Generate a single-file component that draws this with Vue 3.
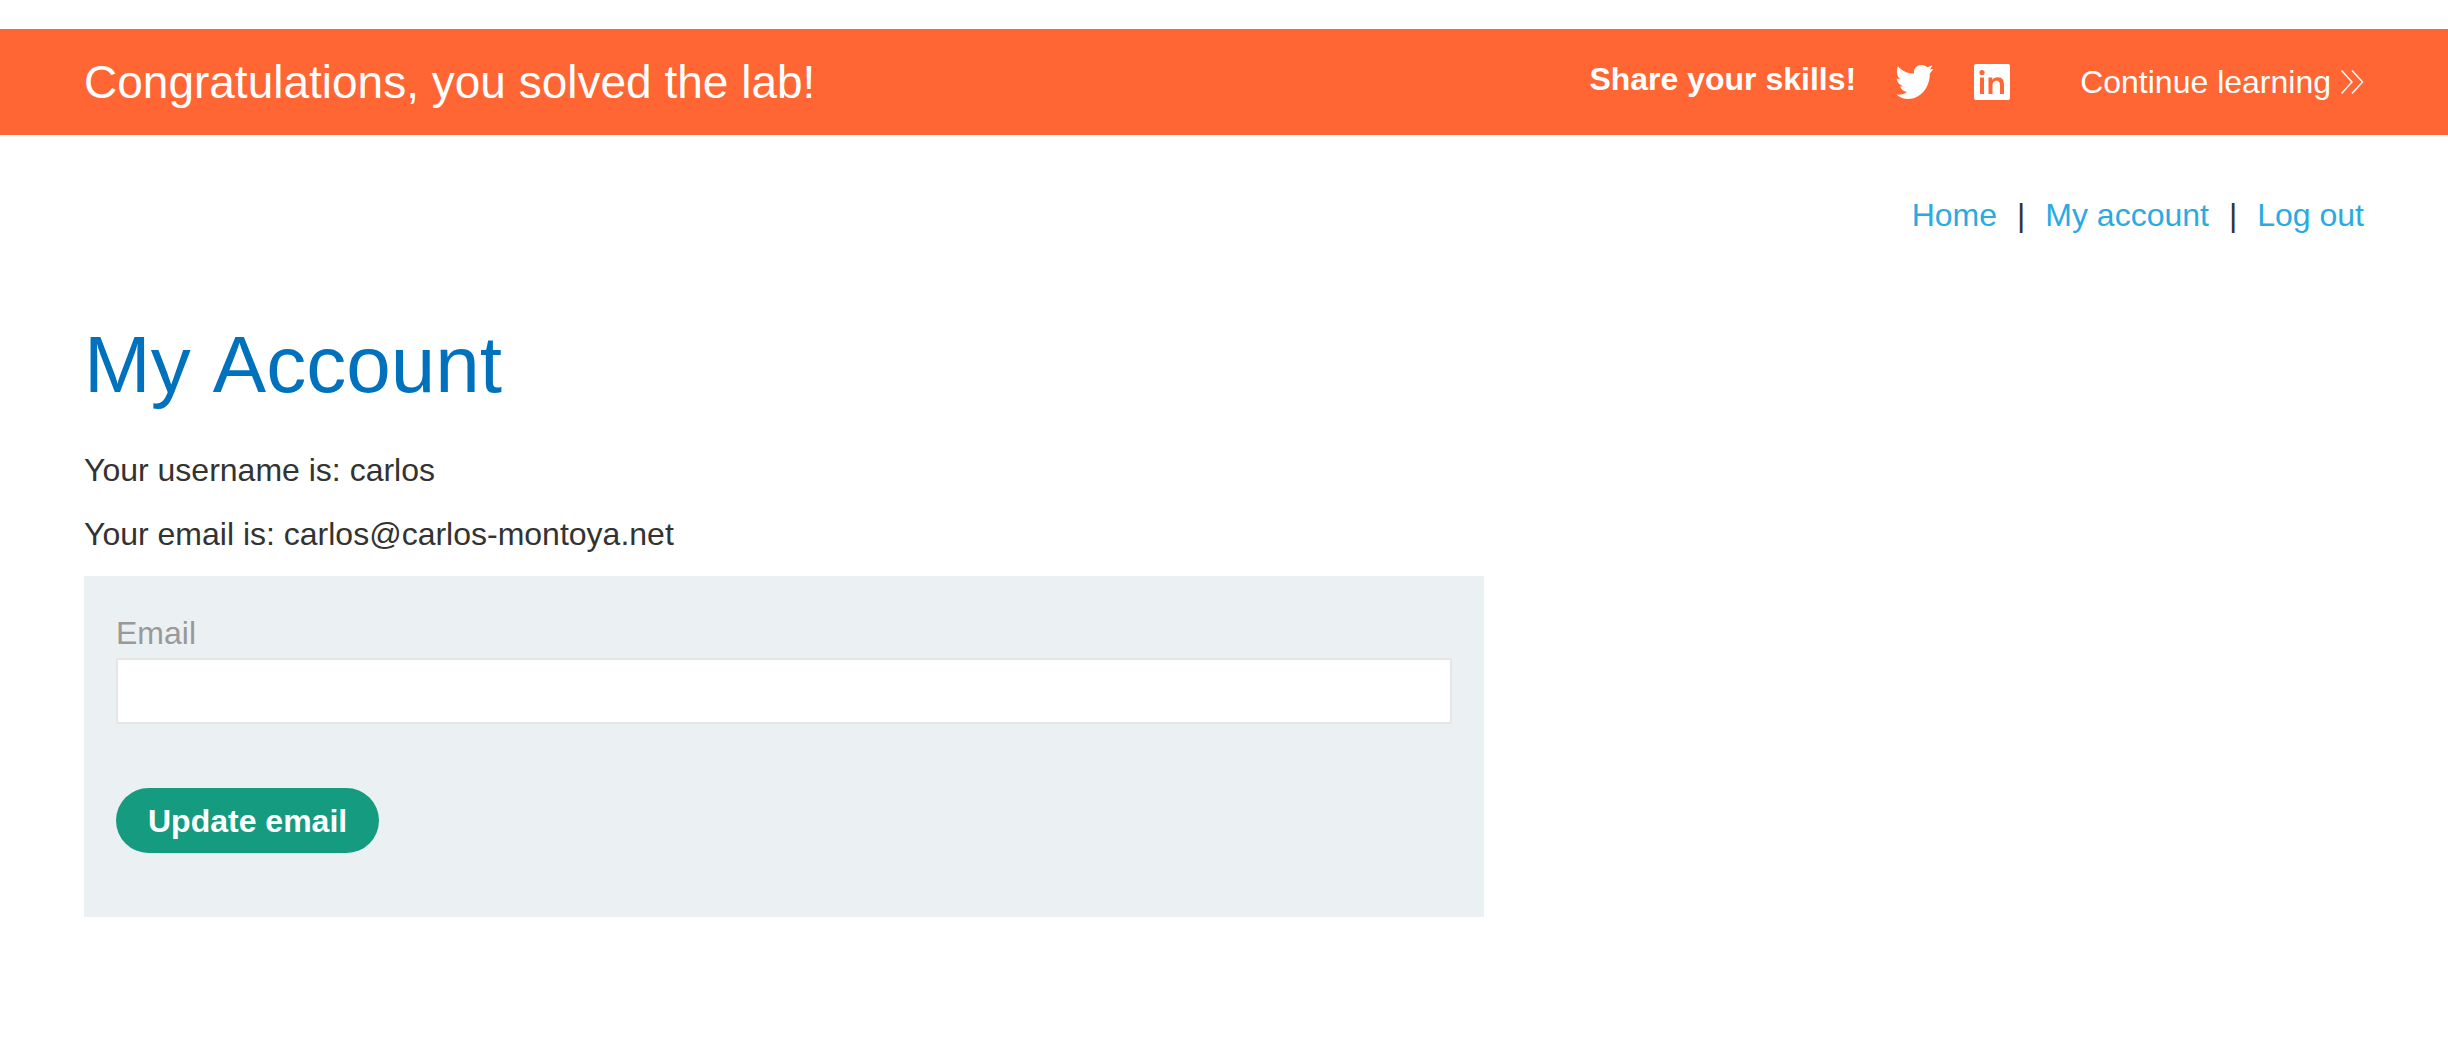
<script setup>
import { ref } from 'vue'

const email = ref('')
const username = 'carlos'
const currentEmail = 'carlos@carlos-montoya.net'
</script>

<template>
  <div class="page">
    <section class="banner">
      <h4 class="banner-title">Congratulations, you solved the lab!</h4>
      <div class="share">
        <span class="share-label">Share your skills!</span>
        <a class="social" href="#twitter" aria-label="Share on Twitter">
          <svg width="38" height="36" viewBox="0 0 38 36" fill="#fff">
            <path d="M2 2.300C6 7 11 9.500 18 9.500C17.500 4 21 1 25.500 1C28 1 30 2 31.500 3.300L36.500 1.300L34 5.500L37.500 5L33.800 9.500C34 24 24 35 12 35C8 35 4 33.500 0.500 30.500C5 31 8.500 30 11 28C7.500 27.500 5 25.500 4.200 22.500L7.500 22.300C3.500 21 1 18 0.800 14.500L4 15.300C1 12.500 0 7 2 2.300Z" />
          </svg>
        </a>
        <a class="social" href="#linkedin" aria-label="Share on LinkedIn">
          <svg width="36" height="36" viewBox="0 0 36 36">
            <rect width="36" height="36" rx="2" fill="#fff" />
            <g fill="#ff6633">
              <circle cx="8" cy="8.500" r="2.600" />
              <path d="M6 13.500H10V30H6Z M14.500 13.500H18.300V16C19.300 14.200 21.300 13.200 23.600 13.200C28.700 13.200 30 16.500 30 21V30H26V22C26 19.500 25.700 16.800 22.500 16.800C19.400 16.800 18.500 19.200 18.500 22V30H14.500Z" />
            </g>
          </svg>
        </a>
      </div>
      <a class="continue" href="#learning">
        Continue learning
        <svg width="23" height="24" viewBox="0 0 23 24" fill="none" stroke="#fff" stroke-width="1.500">
          <path d="M0.500 0.500L11 12L0.500 23.500M11 0.500L21.500 12L11 23.500" />
        </svg>
      </a>
    </section>

    <main class="content">
      <nav class="nav">
        <a href="#home">Home</a><span>|</span>
        <a href="#my-account">My account</a><span>|</span>
        <a href="#logout">Log out</a>
      </nav>
      <h1>My Account</h1>
      <p>Your username is: {{ username }}</p>
      <p>Your email is: {{ currentEmail }}</p>
      <form @submit.prevent>
        <label for="email">Email</label>
        <input id="email" v-model="email" type="email" required />
        <button type="submit">Update email</button>
      </form>
    </main>
  </div>
</template>

<style>
body {
  margin: 0;
  background: #fff;
}
</style>

<style scoped>
.page {
  padding-top: 29px;
  color: #333332;
  font: 32px/36px "Liberation Sans", Arial, sans-serif;
}
.banner {
  display: flex;
  align-items: center;
  height: 106px;
  padding: 0 84px;
  background: #ff6633;
  color: #fff;
}
.banner-title {
  flex: 1;
  margin: 0;
  font-size: 46px;
  font-weight: 400;
  line-height: 52px;
}
.share {
  display: flex;
  align-items: center;
  gap: 40px;
}
.share-label {
  padding-bottom: 6px;
  font-weight: 700;
}
.social {
  display: flex;
}
.continue {
  display: flex;
  align-items: center;
  gap: 10px;
  margin-left: 70px;
  color: #fff;
  text-decoration: none;
}
.content {
  padding: 0 84px;
}
.nav {
  display: flex;
  justify-content: flex-end;
  gap: 20px;
  margin-top: 62px;
}
.nav a {
  color: #29abe2;
  text-decoration: none;
}
h1 {
  margin: 86px 0 41px;
  color: #0071bc;
  font-size: 80px;
  font-weight: 400;
  font-kerning: none;
  line-height: 92px;
}
p {
  margin: 0 0 28px;
}
form {
  display: flex;
  flex-direction: column;
  align-items: flex-start;
  box-sizing: border-box;
  max-width: 1400px;
  margin-top: -4px;
  padding: 39px 32px 64px;
  background: #ebf0f3;
}
label {
  margin-bottom: 7px;
  color: #999;
}
input {
  box-sizing: border-box;
  width: 100%;
  height: 66px;
  padding: 0 16px;
  border: 2px solid #e6e6e6;
  border-radius: 0;
  background: #fff;
  color: inherit;
  font: inherit;
}
button {
  height: 65px;
  margin-top: 64px;
  padding: 0 32px;
  border: 0;
  border-radius: 33px;
  background: #159c80;
  color: #fff;
  font: inherit;
  font-weight: 700;
}
</style>
